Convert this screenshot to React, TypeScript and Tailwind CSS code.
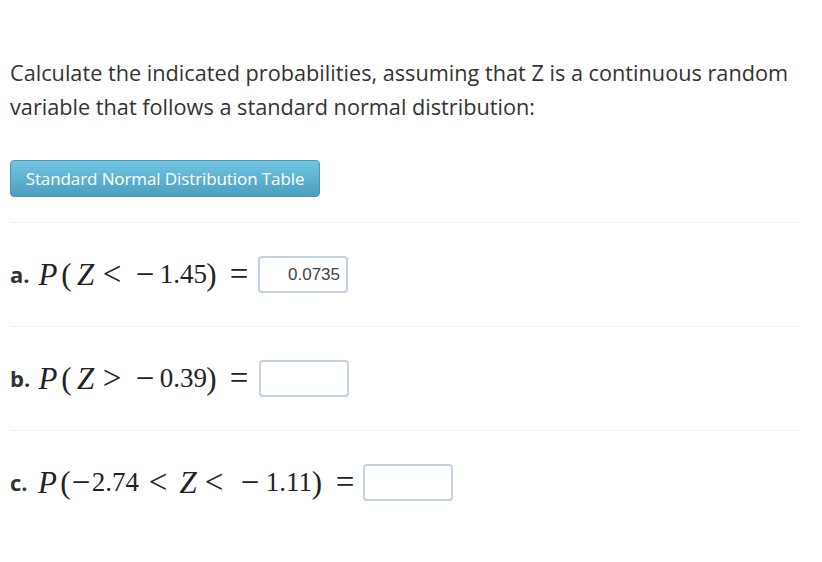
import type { ReactNode } from 'react'

// one math glyph (or group) centred in a fixed-width slot, like KaTeX spacing
const T = ({ w, children, cls = 'justify-center' }: { w: string; children?: ReactNode; cls?: string }) => (
  <span className={`inline-flex shrink-0 ${w} ${cls}`}>{children}</span>
)

const mathFont = 'font-["Liberation_Serif","DejaVu_Serif",serif] text-[#222]'

const AnswerBox = ({ value }: { value?: string }) => (
  <div className="w-[90px] h-[37px] border-2 border-[#c3d1e8] rounded-[4px] bg-white flex items-center justify-end pr-[6px] font-['Liberation_Sans',Arial,sans-serif] text-[17px] text-[#444]">
    {value}
  </div>
)

const Row = ({ label, children, gap, value }: { label: string; children: ReactNode; gap: string; value?: string }) => (
  <div className="border-t border-[#eeeeee] h-[104px] flex items-center">
    <span className="w-[25px] shrink-0 font-bold text-[22px] text-[#333]">{label}</span>
    <span className={`flex items-center text-[31px] leading-none ${mathFont}`}>{children}</span>
    <div className={gap}>
      <AnswerBox value={value} />
    </div>
  </div>
)

const it = 'justify-center italic'
const num = 'justify-end text-[27px]'
const op = 'justify-center text-[33px]'

export default function App() {
  return (
    <div className="w-[822px] h-[562px] bg-white overflow-hidden font-['Open_Sans',sans-serif] text-[#333]">
      <div className="w-[790px] ml-[10px] pt-[56px]">
        <p className="text-[21.7px] leading-[34px]">
          Calculate the indicated probabilities, assuming that Z is a continuous random variable that follows a
          standard normal distribution:
        </p>
        <button className="mt-[36px] h-[37px] w-[310px] rounded-[4px] border border-[#4796b6] bg-gradient-to-b from-[#72c5e2] to-[#4c9ec0] text-white text-[17px] tracking-[-0.1px]">
          Standard Normal Distribution Table
        </button>
        <div className="mt-[25px]">
          <Row label="a." gap="ml-[7px]" value="0.0735">
            <T w="w-[26px]" cls={it}>P</T>
            <T w="w-[11px]">(</T>
            <T w="w-[27px]" cls={it}>Z</T>
            <T w="w-[26px]" cls={op}>&lt;</T>
            <T w="w-[9px]" />
            <T w="w-[22px]" cls={op}>−</T>
            <T w="w-[51px]" cls={num}>1.45</T>
            <T w="w-[9px]">)</T>
            <T w="w-[11px]" />
            <T w="w-[24px]" cls={op}>=</T>
          </Row>
          <Row label="b." gap="ml-[8px]">
            <T w="w-[26px]" cls={it}>P</T>
            <T w="w-[11px]">(</T>
            <T w="w-[27px]" cls={it}>Z</T>
            <T w="w-[26px]" cls={op}>&gt;</T>
            <T w="w-[9px]" />
            <T w="w-[22px]" cls={op}>−</T>
            <T w="w-[51px]" cls={num}>0.39</T>
            <T w="w-[9px]">)</T>
            <T w="w-[11px]" />
            <T w="w-[24px]" cls={op}>=</T>
          </Row>
          <Row label="c." gap="ml-[6px]">
            <T w="w-[25px]" cls={it}>P</T>
            <T w="w-[11px]">(</T>
            <T w="w-[20px]" cls={op}>−</T>
            <T w="w-[48px]" cls={num}>2.74</T>
            <T w="w-[38px]" cls={op}>&lt;</T>
            <T w="w-[22px]" cls={it}>Z</T>
            <T w="w-[30px]" cls={op}>&lt;</T>
            <T w="w-[10px]" />
            <T w="w-[22px]" cls={op}>−</T>
            <T w="w-[51px]" cls={num}>1.11</T>
            <T w="w-[10px]">)</T>
            <T w="w-[11px]" />
            <T w="w-[24px]" cls={op}>=</T>
          </Row>
        </div>
      </div>
    </div>
  )
}
